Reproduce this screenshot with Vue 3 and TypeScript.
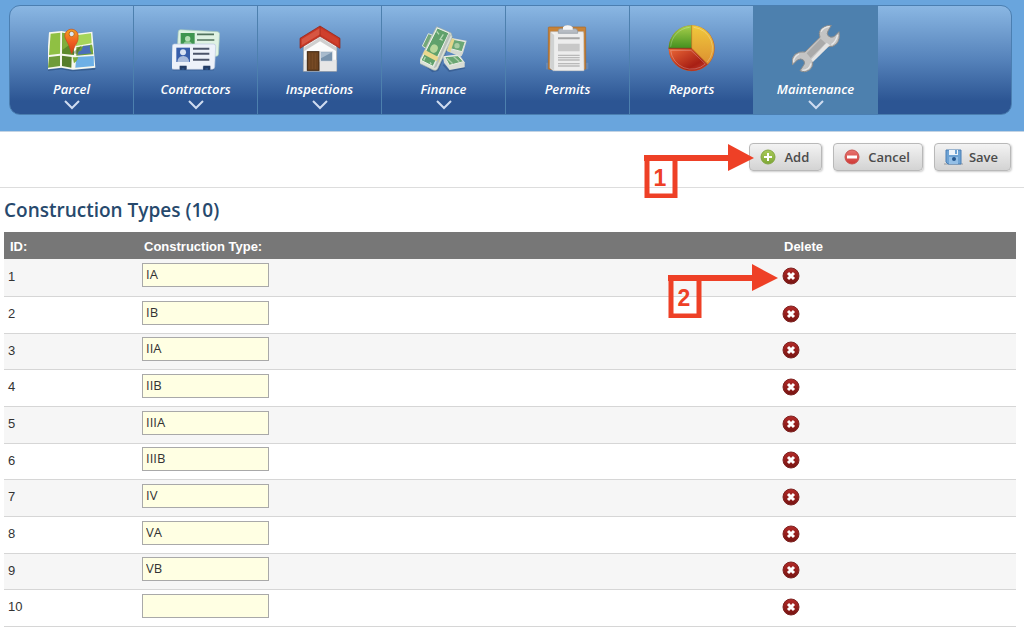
<script setup lang="ts">
import { ref } from 'vue'

interface NavItem {
  id: string
  label: string
  viewBox: string
  menu: boolean
}

interface ConstructionType {
  id: number
  name: string
}

const navItems: NavItem[] = [
  { id: 'parcel', label: 'Parcel', viewBox: '144 75 144 144', menu: true },
  { id: 'contractors', label: 'Contractors', viewBox: '516 75 144 144', menu: true },
  { id: 'inspections', label: 'Inspections', viewBox: '123 75 144 144', menu: true },
  { id: 'finance', label: 'Finance', viewBox: '495 75 144 144', menu: true },
  { id: 'permits', label: 'Permits', viewBox: '117 75 144 144', menu: false },
  { id: 'reports', label: 'Reports', viewBox: '489 75 144 144', menu: false },
  { id: 'maintenance', label: 'Maintenance', viewBox: '126 75 144 144', menu: true },
]
const active = ref('maintenance')

const names = ['IA', 'IB', 'IIA', 'IIB', 'IIIA', 'IIIB', 'IV', 'VA', 'VB', '']
const rows = ref<ConstructionType[]>(names.map((name, i) => ({ id: i + 1, name })))

function addRow(): void {
  const last = rows.value[rows.value.length - 1]
  rows.value.push({ id: last ? last.id + 1 : 1, name: '' })
}

function removeRow(id: number): void {
  rows.value = rows.value.filter((row) => row.id !== id)
}
</script>

<template>
  <div class="page">
    <header class="banner">
      <nav class="nav" aria-label="Main">
        <a
          v-for="item in navItems"
          :key="item.id"
          href="#"
          class="nav-item"
          :class="{ active: item.id === active }"
          @click.prevent="active = item.id"
        >
          <svg class="nav-icon" :viewBox="item.viewBox" aria-hidden="true">
            <g v-if="item.id === 'parcel'">
              <path d="M140 210L183 204L217 211L287 204L285 209L217 214L183 208L142 213Z" fill="#24466f" opacity=".5" />
              <path d="M147 97L185 93L227 101L277 95L286 203L219 209L184 203L139 208Z" fill="#f6f8ee" />
              <path d="M152 101L181 98L180 161L147 165Z" fill="#8fc043" />
              <path d="M187 98L221 104L222 165L186 161Z" fill="#5d8a2c" />
              <path d="M187 98L221 104V125L187 150Z" fill="#7fae3b" />
              <path d="M228 106L273 100L275 130L228 138Z" fill="#a5d55a" />
              <path d="M229 142L276 134L280 163L229 167Z" fill="#6f9f37" />
              <path d="M147 171L180 167L180 198L144 203Z" fill="#6f9c3a" />
              <path d="M186 167L215 171L214 203L186 198Z" fill="#557d2a" />
              <path d="M229 171L281 168L282 198L226 203Z" fill="#6db0e6" />
              <path d="M250 137Q267 138 272 134L276 160L233 164Q235 150 243 153Z" fill="#4b6fb8" />
              <path d="M270 134L276 134L279 161Q267 157 270 134Z" fill="#76a83b" />
              <path d="M218 172H235Q231 185 222 190Z" fill="#7fae3b" />
              <path d="M216 160L245 136L231 162Z" fill="#33502c" opacity=".4" />
              <path d="M215 161Q207 133 198 119A20 20 0 1 1 234 112Q236 121 225 138Q220 148 215 161Z" fill="url(#pin)" stroke="#c8491a" stroke-width="2" />
              <circle cx="215" cy="102" r="8" fill="#dcebf5" stroke="#bd6b20" stroke-width="3" />
            </g>

            <g v-else-if="item.id === 'contractors'">
              <g transform="rotate(3 596 130)">
                <rect x="533" y="92" width="124" height="74" rx="7" fill="#dff2e3" stroke="#a9cdb9" stroke-width="2" />
              </g>
              <rect x="542" y="99" width="42" height="35" fill="#3f9550" />
              <circle cx="563" cy="116" r="8" fill="#b3dfb4" />
              <path d="M550 134Q551 123 563 123T576 134Z" fill="#8bca90" />
              <path d="M591 103H642M591 120H643" stroke="#51725e" stroke-width="5" />
              <path d="M520 202H643L641 211H518Z" fill="#1e3e70" opacity=".7" />
              <path d="M523 132H640Q647 132 647 139L644 201Q643 208 637 208H630V199H609V208H558V199H540V208H522Q514 208 514 201L517 139Q517 132 523 132Z" fill="#edf2fa" stroke="#b8c7df" stroke-width="2" />
              <rect x="529" y="143" width="41" height="43" fill="#375eaa" />
              <circle cx="549" cy="157" r="9" fill="#d9e3f3" />
              <path d="M532 186Q533 169 549 168T568 186Z" fill="#a9bcdc" />
              <path d="M579 146H628M579 161H628M579 179H628" stroke="#4b546a" stroke-width="6" />
              <path d="M539 197H560V209H553V204H545V209H539ZM610 197H631V209H624V204H616V209H610Z" fill="#243d66" />
            </g>

            <g v-else-if="item.id === 'inspections'">
              <path d="M146 130L195 102L245 130V214H145Z" fill="#fbfbfb" stroke="#a1a1a1" stroke-width="2" />
              <path d="M147 179H244V212H147Z" fill="#e6e6e6" />
              <path d="M148 142L195 112L243 142V153L195 124L148 153Z" fill="#999" opacity=".45" />
              <rect x="157" y="155" width="35" height="56" fill="#6d4320" stroke="#3d2410" stroke-width="3" />
              <path d="M163 160V207M172 160V207M181 160V207" stroke="#80522b" stroke-width="2" />
              <rect x="196" y="155" width="37" height="29" fill="#7893ad" stroke="#e1e4e7" stroke-width="3" />
              <path d="M198 157H231L198 175Z" fill="#a8bbcd" />
              <path d="M195 78L255 115V145L195 109L135 145V115Z" fill="#c73624" stroke="#8f2115" stroke-width="2" />
              <path d="M140 118L195 84V103L140 136Z" fill="#d65643" />
              <path d="M195 84L250 118V136L195 103Z" fill="#cf402d" />
              <path d="M195 79V109" stroke="#942417" stroke-width="2" />
            </g>

            <g v-else-if="item.id === 'finance'">
              <path d="M500 187L533 214L548 211L592 110M565 194L583 213L630 203" fill="none" stroke="#203c6a" stroke-width="5" opacity=".35" />
              <path d="M520 101L532 105L514 146L502 138Z" fill="#73a879" stroke="#dbe5d9" stroke-width="3" />
              <path d="M587 113L635 122L624 160Q620 173 611 168L575 153Z" fill="#d5d9d1" />
              <path d="M590 117L631 125L621 155L578 144Z" fill="#6ba775" stroke="#e8ede4" stroke-width="3" />
              <path d="M588 114L599 118L586 157L577 152Z" fill="#e5d68b" />
              <circle cx="606" cy="137" r="8" fill="#a9cda2" />
              <path d="M564 169L612 163L629 187V202L584 210L567 188Z" fill="#d8ddd5" />
              <path d="M569 170L609 167L625 185L583 196Z" fill="#69a672" stroke="#edf0e8" stroke-width="3" />
              <path d="M576 175L593 191M596 170L613 185" stroke="#abcdaa" stroke-width="4" />
              <path d="M545 80L588 99L592 111L548 206Q544 214 533 209L494 190V180Z" fill="#dbe1d8" stroke="#a7b3a8" stroke-width="2" />
              <path d="M547 84L582 99L534 199L498 181Z" fill="#60a16c" stroke="#edf3e8" stroke-width="3" />
              <ellipse cx="537" cy="146" rx="11" ry="13" transform="rotate(25 537 146)" fill="#b8d79b" />
              <path d="M510 150L556 174L553 188L504 162Z" fill="#ead88d" />
              <path d="M545 94L552 103M565 103L554 120M511 171L506 181M525 187L529 193M556 117L563 121" stroke="#b6d9b5" stroke-width="4" />
              <path d="M582 100L588 105L544 201L536 205Z" fill="#b8c1b9" />
            </g>

            <g v-else-if="item.id === 'permits'">
              <path d="M123 188H250V208Q187 219 123 208Z" fill="#8fa3bd" opacity=".35" />
              <rect x="130" y="81" width="112" height="127" rx="2" fill="#c78338" stroke="#a96625" stroke-width="2" />
              <path d="M137 95H235L237 212H145L135 204Z" fill="#f1f2f1" stroke="#bdbdbd" stroke-width="2" />
              <path d="M137 97L148 105V211L136 204Z" fill="#d0d2d2" />
              <path d="M149 100H235V211H149Z" fill="#ededed" />
              <path d="M159 115H224" stroke="#a5a5a5" stroke-width="6" />
              <path d="M159 131H224V154H159Z" fill="#c8c8c8" />
              <path d="M159 166H224M159 173H224M159 180H224M159 191H224M159 198H224" stroke="#b9b9b9" stroke-width="4" />
              <path d="M160 100V91Q160 86 167 86H174Q175 76 188 76T203 86H211Q218 87 218 94V100Z" fill="#b7bcc3" stroke="#8d959f" stroke-width="2" />
              <path d="M174 89V82Q178 76 188 76T203 82V89Z" fill="#f6f6f6" />
            </g>

            <g v-else-if="item.id === 'reports'">
              <circle cx="560" cy="145" r="69" fill="#bd5c2d" />
              <path d="M560 145V76A69 69 0 0 1 608 193Z" fill="url(#pie-gold)" />
              <path d="M560 145H491A69 69 0 0 1 560 76Z" fill="url(#pie-green)" />
              <path d="M560 145L608 193A69 69 0 0 1 491 145Z" fill="url(#pie-red)" />
              <path d="M560 76V145L608 193" fill="none" stroke="#c47b22" stroke-width="2" />
              <path d="M491 145H560" fill="none" stroke="#8a3d1c" stroke-width="3" />
              <path d="M497 140A63 63 0 0 1 554 82M566 82A63 63 0 0 1 607 186M601 192A63 63 0 0 1 497 151H558Z" fill="none" stroke="#fff" stroke-width="3" opacity=".25" />
            </g>

            <g v-else>
              <path
                d="M244 76Q222 76 211 90Q205 99 210 112L165 156Q148 153 135 163Q122 176 127 195L142 180Q153 173 161 181Q167 190 160 197L150 212Q165 220 178 210Q190 201 188 184L233 140Q248 143 259 132Q271 119 267 95L252 110Q241 114 235 108Q229 101 234 93Z"
                fill="#c4c4c4"
                stroke="#8c8c8c"
                stroke-width="3"
                stroke-linejoin="round"
              />
              <path d="M212 116L227 130L182 174L170 160Z" fill="#aaa" />
              <path d="M230 128L240 136L188 187L184 178Z" fill="#e5e5e5" />
              <path d="M239 79Q219 82 213 95M263 105Q257 127 244 134M131 187Q130 170 147 162M157 211Q178 211 183 190" fill="none" stroke="#e8e8e8" stroke-width="4" />
            </g>
          </svg>
          <span class="nav-label">{{ item.label }}</span>
          <svg v-if="item.menu" class="chevron" viewBox="0 0 16 10" aria-hidden="true">
            <path d="M1 1L8 8L15 1" fill="none" stroke="#cfdcf0" stroke-width="2" />
          </svg>
        </a>
      </nav>
      <svg class="defs" width="0" height="0" aria-hidden="true">
        <defs>
          <linearGradient id="pin" x1="0" y1="0" x2="0" y2="1">
            <stop offset="0" stop-color="#f5a51f" />
            <stop offset=".5" stop-color="#f06022" />
            <stop offset="1" stop-color="#cf3d17" />
          </linearGradient>
          <linearGradient id="pie-gold" x1="0" y1="0" x2="0" y2="1">
            <stop offset="0" stop-color="#f0c93c" />
            <stop offset="1" stop-color="#dc9031" />
          </linearGradient>
          <linearGradient id="pie-green" x1="0" y1="0" x2="0" y2="1">
            <stop offset="0" stop-color="#a8cf4b" />
            <stop offset="1" stop-color="#43901f" />
          </linearGradient>
          <linearGradient id="pie-red" x1="0" y1="0" x2="1" y2="1">
            <stop offset="0" stop-color="#ec6937" />
            <stop offset=".7" stop-color="#a81f14" />
            <stop offset="1" stop-color="#c94331" />
          </linearGradient>
          <linearGradient id="badge-green" x1="0" y1="0" x2="0" y2="1">
            <stop offset="0" stop-color="#a9ca57" />
            <stop offset="1" stop-color="#7da636" />
          </linearGradient>
          <linearGradient id="badge-red" x1="0" y1="0" x2="0" y2="1">
            <stop offset="0" stop-color="#e77470" />
            <stop offset="1" stop-color="#cf3835" />
          </linearGradient>
          <linearGradient id="badge-dark" x1="0" y1="0" x2="0" y2="1">
            <stop offset="0" stop-color="#b32a28" />
            <stop offset="1" stop-color="#761311" />
          </linearGradient>
        </defs>
      </svg>
    </header>

    <div class="toolbar">
      <div class="anchor">
        <button type="button" class="btn" @click="addRow">
          <svg class="btn-icon" viewBox="0 0 16 16" aria-hidden="true">
            <circle cx="8" cy="8" r="7" fill="url(#badge-green)" stroke="#83a744" stroke-width="1" />
            <path d="M8 4V12M4 8H12" stroke="#fff" stroke-width="2" />
          </svg>
          Add
        </button>
        <svg class="callout callout-add" viewBox="0 0 111 54" aria-hidden="true">
          <rect x="3" y="14" width="28" height="38" fill="none" stroke="#ee4026" stroke-width="5" />
          <path d="M0 11H84V0L110 14L84 27V17H0Z" fill="#ee4026" />
          <text x="16" y="42" text-anchor="middle">1</text>
        </svg>
      </div>
      <button type="button" class="btn">
        <svg class="btn-icon" viewBox="0 0 16 16" aria-hidden="true">
          <circle cx="8" cy="8" r="7" fill="url(#badge-red)" stroke="#c9524e" stroke-width="1" />
          <path d="M3 8H13" stroke="#fff" stroke-width="3" />
        </svg>
        Cancel
      </button>
      <button type="button" class="btn">
        <svg class="btn-icon" viewBox="0 0 16 16" aria-hidden="true">
          <path d="M-1 15H18" stroke="#979ba0" stroke-width="1" />
          <path d="M1 1H16V15H3L1 13Z" fill="#6ea3d4" stroke="#4b7fb5" stroke-width="1" />
          <path d="M4 1H13V6H4Z" fill="#eef4fa" />
          <path d="M10 1H12V5H10Z" fill="#6ea3d4" />
          <path d="M4 8H13V15H4Z" fill="#94bfe6" />
          <circle cx="9" cy="10" r="2" fill="#24578f" />
        </svg>
        Save
      </button>
    </div>

    <main class="content">
      <h1 class="title">Construction Types ({{ rows.length }})</h1>
      <table class="grid">
        <colgroup>
          <col class="col-id" />
          <col class="col-type" />
          <col class="col-delete" />
        </colgroup>
        <thead>
          <tr>
            <th scope="col">ID:</th>
            <th scope="col">Construction Type:</th>
            <th scope="col">Delete</th>
          </tr>
        </thead>
        <tbody>
          <tr v-for="(row, index) in rows" :key="row.id">
            <td class="id-cell">{{ row.id }}</td>
            <td class="type-cell">
              <input v-model="row.name" type="text" class="field" :aria-label="`Construction type ${row.id}`" />
            </td>
            <td class="delete-cell">
              <div class="anchor">
                <button type="button" class="remove" :aria-label="`Delete ${row.id}`" @click="removeRow(row.id)">
                  <svg viewBox="0 0 18 18" aria-hidden="true">
                    <circle cx="9" cy="9" r="8" fill="url(#badge-dark)" stroke="#7d2422" stroke-width="1" />
                    <path d="M6 6L12 12M12 6L6 12" stroke="#fff" stroke-width="3" />
                  </svg>
                </button>
                <svg v-if="index === 0" class="callout callout-delete" viewBox="0 0 111 54" aria-hidden="true">
                  <rect x="3" y="14" width="28" height="38" fill="none" stroke="#ee4026" stroke-width="5" />
                  <path d="M0 11H84V0L110 14L84 27V17H0Z" fill="#ee4026" />
                  <text x="16" y="42" text-anchor="middle">2</text>
                </svg>
              </div>
            </td>
          </tr>
        </tbody>
      </table>
    </main>
  </div>
</template>

<style>
body {
  margin: 0;
  background: #fff;
}
</style>

<style scoped>
.page {
  color: #333;
  font-family: "Liberation Sans", sans-serif;
  font-size: 13px;
}

.banner {
  padding: 5px 12px 16px 9px;
  background: #69a5dd;
  border-bottom: 1px solid #c3d3e3;
}

.defs {
  position: absolute;
}

.nav {
  display: flex;
  height: 108px;
  overflow: hidden;
  border: 1px solid #4b7fb1;
  border-radius: 11px;
  background: linear-gradient(#8ab7e3, #5582ba 50%, #2c5593 88%, #2c5593);
}

.nav-item {
  box-sizing: border-box;
  display: flex;
  flex: 0 1 124px;
  flex-direction: column;
  align-items: center;
  padding-top: 19px;
  border-right: 1px solid #4d80ae;
  color: #fff;
  text-decoration: none;
}

.nav-item.active {
  background: #4d80ae;
}

.nav-icon {
  width: 48px;
  height: 48px;
}

.nav-label {
  margin-top: 6px;
  font: italic 600 13px/20px "Trebuchet MS", "Open Sans", sans-serif;
}

.chevron {
  width: 16px;
  height: 10px;
  margin-top: 1px;
}

.toolbar {
  display: flex;
  justify-content: flex-end;
  gap: 11px;
  padding: 11px 13px 16px;
  border-bottom: 1px solid #ddd;
}

.anchor {
  position: relative;
  display: flex;
}

.btn {
  display: flex;
  align-items: center;
  gap: 8px;
  height: 28px;
  padding: 0 12px 0 10px;
  border: 1px solid #b9b9b9;
  border-radius: 4px;
  background: linear-gradient(#f3f3f3, #d3d3d3);
  box-shadow: 1px 1px 2px rgba(0, 0, 0, 0.2);
  color: #4b4b4b;
  font: 600 13px/20px "Trebuchet MS", "Open Sans", sans-serif;
}

.btn-icon {
  width: 16px;
  height: 16px;
  overflow: visible;
}

.callout {
  position: absolute;
  z-index: 1;
  width: 111px;
  height: 54px;
  pointer-events: none;
}

.callout text {
  fill: #ee4026;
  font: bold 23px "Liberation Sans", sans-serif;
}

.callout-add {
  top: 1px;
  right: 67px;
}

.callout-delete {
  top: -3px;
  right: calc(100% + 3px);
}

.content {
  padding: 8px 8px 6px 4px;
}

.title {
  margin: 0 0 8px;
  color: #27496d;
  font: 600 19px/28px "Trebuchet MS", "Open Sans", sans-serif;
}

.grid {
  width: 100%;
  border-collapse: collapse;
  table-layout: fixed;
}

.col-id {
  width: 134px;
}

.col-delete {
  width: 238px;
}

.grid th {
  box-sizing: border-box;
  height: 27px;
  padding: 1px 6px 0;
  background: #777;
  color: #fff;
  font-weight: bold;
  text-align: left;
}

.grid td {
  box-sizing: border-box;
  height: 37px;
  padding: 0 4px 2px;
  border-bottom: 1px solid #d6d6d6;
}

.grid tr:nth-child(3n) td {
  height: 36px;
}

.grid tbody tr:nth-child(odd) {
  background: #f6f6f6;
}

.field {
  box-sizing: border-box;
  display: block;
  width: 127px;
  height: 24px;
  margin-bottom: 2px;
  padding: 0 3px 2px;
  border: 1px solid #a9a9a9;
  background: #ffffe3;
  color: #333;
  font: 13px/20px "Trebuchet MS", "Open Sans", sans-serif;
}

.remove {
  width: 18px;
  height: 18px;
  padding: 0;
  border: 0;
  background: none;
}

.remove svg {
  display: block;
  width: 18px;
  height: 18px;
}
</style>
